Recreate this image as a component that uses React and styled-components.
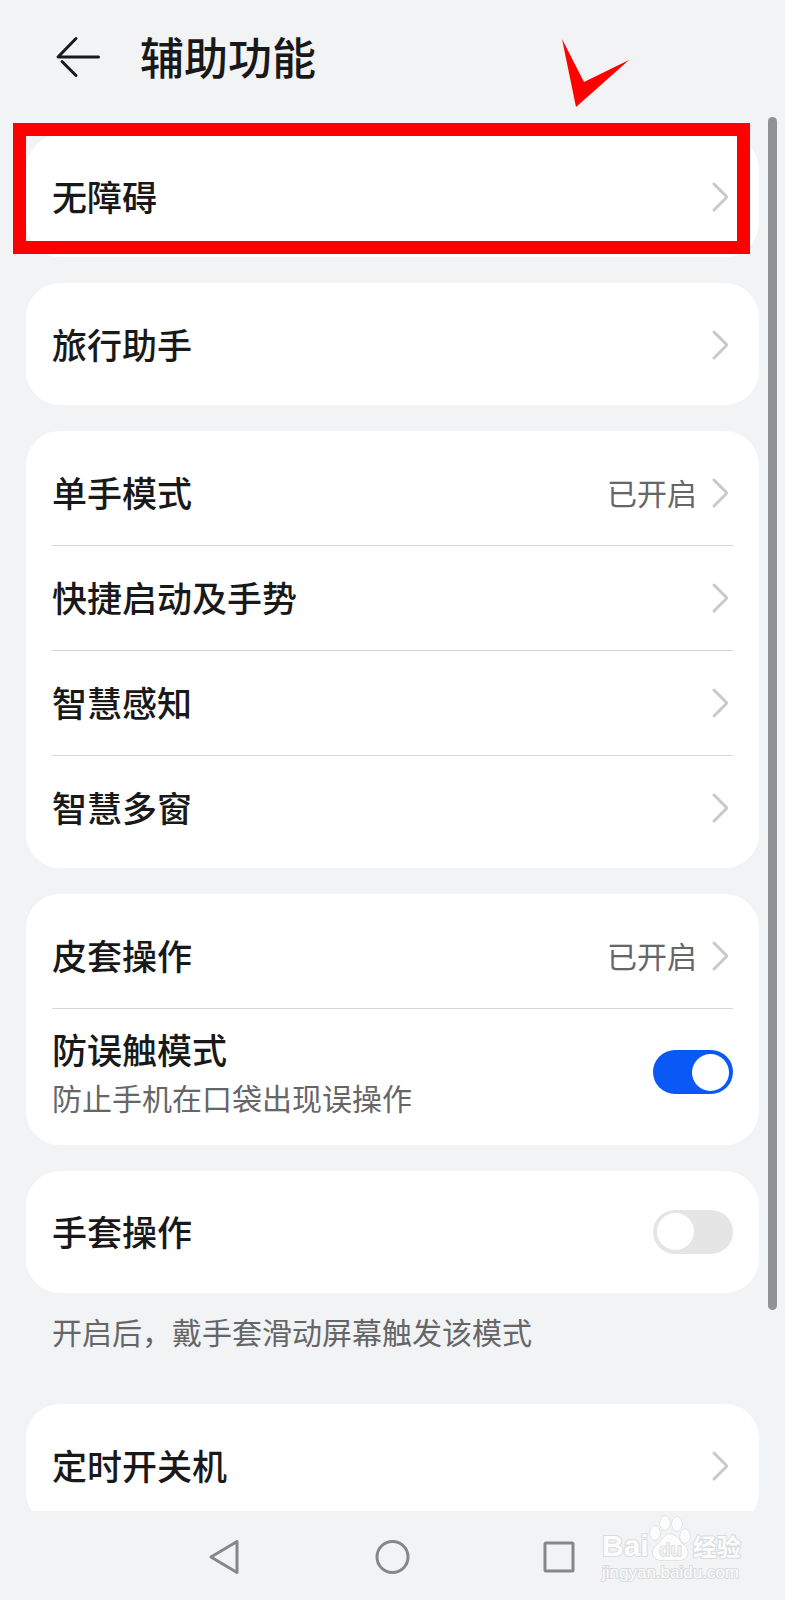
import React, { useState } from 'react';
import styled, { createGlobalStyle } from 'styled-components';

const GlobalStyle = createGlobalStyle`
  * {
    box-sizing: border-box;
  }
  body {
    margin: 0;
    background: #f1f3f5;
    font-family: "Noto Sans CJK SC", sans-serif;
    color: #191919;
  }
`;

// Page layout
const Screen = styled.div`
  display: flex;
  flex-direction: column;
  height: 100vh;
  overflow: hidden;
`;

const Header = styled.header`
  position: relative;
  display: flex;
  align-items: center;
  gap: 36px;
  height: 115px;
  padding: 0 52px 2px;
`;

const IconButton = styled.button`
  display: flex;
  align-items: center;
  justify-content: center;
  width: ${(props) => props.$width || 52}px;
  height: 52px;
  padding: 0;
  border: 0;
  background: transparent;
`;

const Title = styled.h1`
  margin: 0;
  padding-bottom: 2px;
  font-size: 44px;
  font-weight: 500;
  line-height: 52px;
`;

const TickMark = styled.svg`
  position: absolute;
  top: 39px;
  right: 156px;
`;

const Content = styled.main`
  position: relative;
  flex: 1;
  min-height: 0;
  overflow: hidden;
`;

const List = styled.div`
  display: flex;
  flex-direction: column;
  gap: 26px;
  padding: 20px 26px;
`;

const ScrollThumb = styled.div`
  position: absolute;
  top: 2px;
  right: 8px;
  bottom: 201px;
  width: 9px;
  border-radius: 5px;
  background: #909294;
`;

// Cards and rows
const Card = styled.section`
  position: relative;
  padding: 9px 26px 8px;
  border-radius: 34px;
  background: #fff;
`;

const Highlight = styled.div`
  position: absolute;
  top: -12px;
  right: 9px;
  bottom: 3px;
  left: -13px;
  border: 13px solid #ff0000;
  pointer-events: none;
`;

const Row = styled.button`
  display: flex;
  align-items: center;
  gap: 12px;
  width: 100%;
  height: ${(props) => (props.$tall ? 129 : 105)}px;
  padding: 0;
  border: 0;
  background: transparent;
  color: inherit;
  font-family: inherit;
  text-align: left;

  & + & {
    border-top: 1px solid #d8d8d8;
  }
`;

const SwitchRow = styled(Row)`
  padding-bottom: 2px;

  ${Row} + & {
    border-top: 1px solid #d8d8d8;
  }
`;

const Texts = styled.span`
  display: flex;
  flex: 1;
  flex-direction: column;
  padding-bottom: 2px;
`;

const Label = styled.span`
  font-size: 35px;
  font-weight: 500;
  line-height: 52px;
`;

const Detail = styled.span`
  color: #666;
  font-size: 30px;
  line-height: 44px;
`;

const Status = styled(Detail)`
  padding-bottom: 2px;
`;

const Note = styled.p`
  margin: 0;
  padding: 16px 26px 25px;
  color: #666;
  font-size: 30px;
  line-height: 44px;
`;

const Switch = styled.input`
  appearance: none;
  display: flex;
  align-items: center;
  width: 80px;
  height: 44px;
  margin: 0;
  padding: 0 4px;
  border-radius: 22px;
  background: #e5e5e5;

  &::before {
    content: "";
    width: 37px;
    height: 37px;
    border-radius: 50%;
    background: #fff;
  }

  &:checked {
    justify-content: flex-end;
    background: #0a59f7;
  }
`;

// Bottom navigation
const NavBar = styled.nav`
  position: relative;
  display: flex;
  align-items: center;
  justify-content: center;
  height: 89px;
  padding-top: 2px;
`;

const Watermark = styled.div`
  position: absolute;
  top: 4px;
  right: 40px;
  width: 143px;
  color: #fcfcfc;
  -webkit-text-stroke: 2px #d9dbdd;
  paint-order: stroke fill;
  font-family: "Liberation Sans", "Noto Sans CJK SC", sans-serif;
  pointer-events: none;
`;

const Brand = styled.div`
  display: flex;
  align-items: flex-end;
  height: 46px;
  font-size: 30px;
  font-weight: 700;
  line-height: 30px;
`;

const BrandSuffix = styled.span`
  margin-left: 2px;
  font-family: "Noto Sans CJK SC", sans-serif;
  font-size: 24px;
`;

const Site = styled.div`
  font-size: 17px;
  line-height: 24px;
`;

const Chevron = () => (
  <svg width="24" height="36" viewBox="0 0 24 36" fill="none" stroke="#c9c9c9" strokeWidth="3" strokeLinecap="round" strokeLinejoin="round">
    <path d="M5 5L17 17Q18 18 17 19L5 31" />
  </svg>
);

const NavRow = ({ label, status }) => (
  <Row type="button">
    <Texts>
      <Label>{label}</Label>
    </Texts>
    {status && <Status>{status}</Status>}
    <Chevron />
  </Row>
);

const ToggleRow = ({ id, label, detail, initial }) => {
  const [on, setOn] = useState(initial);

  return (
    <SwitchRow as="label" htmlFor={id} $tall={Boolean(detail)}>
      <Texts>
        <Label>{label}</Label>
        {detail && <Detail>{detail}</Detail>}
      </Texts>
      <Switch id={id} type="checkbox" role="switch" checked={on} onChange={() => setOn(!on)} />
    </SwitchRow>
  );
};

const App = () => {
  return (
    <Screen>
      <GlobalStyle />
      <Header>
        <IconButton type="button" aria-label="返回">
          <svg width="52" height="44" viewBox="0 0 52 44" fill="none" stroke="#191919" strokeWidth="3" strokeLinecap="round" strokeLinejoin="round">
            <path d="M24 3.500L6 22H46.500M10 26.500L24 40.500" />
          </svg>
        </IconButton>
        <Title>辅助功能</Title>
        <TickMark width="67" height="68" viewBox="0 0 67 68">
          <path d="M0 0L22 43L67 21L14 68Z" fill="#ff0000" />
        </TickMark>
      </Header>

      <Content>
        <List>
          <Card>
            <NavRow label="无障碍" />
            <Highlight />
          </Card>
          <Card>
            <NavRow label="旅行助手" />
          </Card>
          <Card>
            <NavRow label="单手模式" status="已开启" />
            <NavRow label="快捷启动及手势" />
            <NavRow label="智慧感知" />
            <NavRow label="智慧多窗" />
          </Card>
          <Card>
            <NavRow label="皮套操作" status="已开启" />
            <ToggleRow id="mistouch" label="防误触模式" detail="防止手机在口袋出现误操作" initial={true} />
          </Card>
          <div>
            <Card>
              <ToggleRow id="glove" label="手套操作" initial={false} />
            </Card>
            <Note>开启后，戴手套滑动屏幕触发该模式</Note>
          </div>
          <Card>
            <NavRow label="定时开关机" />
          </Card>
        </List>
        <ScrollThumb />
      </Content>

      <NavBar>
        <IconButton type="button" $width={167} aria-label="后退">
          <svg width="36" height="36" viewBox="0 0 36 36" fill="none" stroke="#868788" strokeWidth="3" strokeLinejoin="round">
            <path d="M29 2.500V33.500L3 18Z" />
          </svg>
        </IconButton>
        <IconButton type="button" $width={167} aria-label="主页">
          <svg width="36" height="36" viewBox="0 0 36 36" fill="none" stroke="#868788" strokeWidth="3">
            <circle cx="17.500" cy="18" r="15.500" />
          </svg>
        </IconButton>
        <IconButton type="button" $width={167} aria-label="最近任务">
          <svg width="36" height="36" viewBox="0 0 36 36" fill="none" stroke="#868788" strokeWidth="3">
            <rect x="3" y="4" width="28" height="28" rx="1" />
          </svg>
        </IconButton>
        <Watermark>
          <Brand>
            <span>Bai</span>
            <svg width="42" height="46" viewBox="0 0 42 46" fill="#fcfcfc" stroke="#cdcfd1" strokeWidth="1">
              <ellipse cx="6" cy="18" rx="5" ry="7" />
              <ellipse cx="16" cy="8" rx="5" ry="7" />
              <ellipse cx="28" cy="9" rx="5" ry="7" />
              <ellipse cx="36" cy="21" rx="5" ry="7" />
              <path d="M21 19C15 19 13 26 8 30C1 35 3 45 12 45H31C40 45 41 35 35 30C30 26 27 19 21 19Z" />
              <text x="10" y="41" fontSize="19" fontWeight="700" fill="#eef0f2">du</text>
            </svg>
            <BrandSuffix>经验</BrandSuffix>
          </Brand>
          <Site>jingyan.baidu.com</Site>
        </Watermark>
      </NavBar>
    </Screen>
  );
};

export default App;
